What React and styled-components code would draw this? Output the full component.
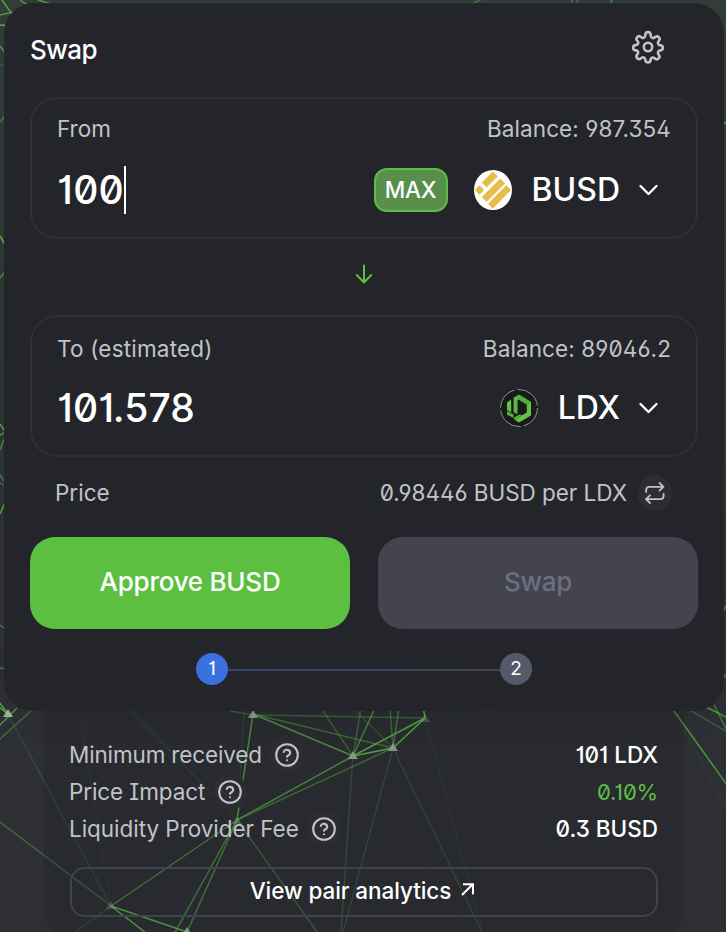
import React from "react";
import styled, { createGlobalStyle } from "styled-components";

const GlobalStyle = createGlobalStyle`
  * { box-sizing: border-box; }
  html, body { margin: 0; padding: 0; overflow: hidden; background: #2e3034; }
  body {
    font-family: Inter, sans-serif;
    font-feature-settings: "zero" on, "ss01" on, "cv08" on, "cv01" on, "cv03" on;
    color: #fff;
  }
  button { font: inherit; font-feature-settings: inherit; color: inherit; padding: 0; border: 0; background: none; }
`;

const Page = styled.main`
  position: relative;
  width: 726px;
  height: 932px;
  overflow: hidden;
  padding: 3px 2px 0 4px;
  background: linear-gradient(#333e3a 0, #303936 250px, #2f3236 560px, #2e2f34 750px);
`;

const Network = styled.svg`
  position: absolute;
  inset: 0;
`;

const Card = styled.section`
  position: relative;
  z-index: 1;
  height: 708px;
  padding: 94px 26px 0;
  border-radius: 30px;
  background: #24252a;
  box-shadow: 0 8px 30px rgba(0, 0, 0, 0.06);
  display: flex;
  flex-direction: column;
`;

const Header = styled.header`
  display: flex;
  justify-content: space-between;
  align-items: center;
  height: 40px;
  margin: -70px 33px 30px 0;
`;

const Title = styled.h1`
  margin: 6px 0 0;
  font-size: 26px;
  line-height: 32px;
  font-weight: 500;
  letter-spacing: -0.5px;
`;

const Field = styled.div`
  height: 142px;
  padding: ${(p) => p.$top}px 25px 0;
  border: 2px solid #2e3035;
  border-radius: 27px;
`;

const Between = styled.div`
  display: flex;
  justify-content: space-between;
  align-items: center;
  height: ${(p) => p.$h}px;
`;

const Label = styled.span`
  font-size: 22.5px;
  line-height: 28px;
  color: #c1c3c8;
  white-space: nowrap;
  letter-spacing: ${(p) => p.$ls || 0}px;
`;

const Amount = styled.div`
  display: flex;
  align-items: center;
  font-size: 39px;
  line-height: 48px;
  font-weight: 500;
  letter-spacing: ${(p) => p.$ls || 0}px;
`;

const Caret = styled.i`
  width: 2px;
  height: 48px;
  background: #fff;
`;

const TokenSide = styled.div`
  display: flex;
  align-items: center;
  padding-right: 13px;
`;

const MaxButton = styled.button`
  width: 74px;
  height: 44px;
  margin-right: 26px;
  padding-bottom: 1px;
  border: 2px solid #5fbf45;
  border-radius: 13px;
  background: #588f4b;
  font-size: 22.5px;
  font-weight: 480;
  letter-spacing: -0.3px;
`;

const TokenName = styled.span`
  margin: 0 19px 0 20px;
  font-size: 32px;
  line-height: 40px;
  font-weight: 460;
`;

const ArrowRow = styled.div`
  display: flex;
  justify-content: center;
  align-items: center;
  height: 76px;
  padding-bottom: 6px;
`;

const PriceRow = styled(Between)`
  padding: 0 26px 0 25px;
  margin-top: 17px;
`;

const PriceValue = styled.div`
  display: flex;
  align-items: center;
  gap: 11px;
`;

const RoundButton = styled.button`
  display: grid;
  place-items: center;
  width: 34px;
  height: 36px;
  border-radius: 50%;
  background: #2d2e33;
`;

const Actions = styled.div`
  display: grid;
  grid-template-columns: 1fr 1fr;
  gap: 28px;
  margin-top: 25px;
`;

const ActionButton = styled.button`
  height: 92px;
  padding-bottom: 3px;
  border-radius: 25px;
  font-size: 26px;
  font-weight: 460;
  letter-spacing: -0.25px;
  color: ${(p) => (p.$primary ? "#fff" : "#6c6f7e")};
  background: ${(p) => (p.$primary ? "#5dbf40" : "#43444f")};
`;

const Steps = styled.div`
  display: flex;
  align-items: center;
  justify-content: center;
  margin-top: 24px;
`;

const Step = styled.span`
  display: grid;
  place-items: center;
  width: 32px;
  height: 32px;
  padding-bottom: 1px;
  border-radius: 50%;
  background: ${(p) => (p.$active ? "#3b71de" : "#565969")};
  font-size: 19px;
`;

const StepLine = styled.span`
  width: 272px;
  height: 2px;
  margin-top: 2px;
  background: linear-gradient(90deg, #34436a, #41444e);
`;

const Details = styled.section`
  position: relative;
  width: 640px;
  height: 275px;
  margin: -50px 0 0 40px;
  padding: 76px 26px 0;
  border-radius: 0 0 26px 26px;
  background: rgba(18, 19, 24, 0.19);
`;

const DetailName = styled.div`
  display: flex;
  align-items: center;
  gap: 7px;
  margin-left: -1px;
`;

const HelpBadge = styled.span`
  display: grid;
  place-items: center;
  width: 36px;
  height: 36px;
  border-radius: 50%;
  background: #2c2d32;
`;

const DetailValue = styled.span`
  font-size: ${(p) => (p.$good ? 22 : 22.5)}px;
  line-height: 28px;
  font-weight: ${(p) => (p.$good ? 420 : 490)};
  letter-spacing: ${(p) => (p.$good ? -0.2 : 0)}px;
  color: ${(p) => (p.$good ? "#5dbf45" : "#fff")};
`;

const AnalyticsButton = styled.button`
  display: flex;
  align-items: center;
  justify-content: center;
  gap: 10px;
  width: 588px;
  height: 50px;
  margin-top: 20px;
  padding: 0 4px 3px 0;
  border: 2px solid #40424c;
  border-radius: 15px;
  font-size: 22.5px;
  font-weight: 490;
  letter-spacing: -0.08px;

  svg { margin-bottom: 3px; }
`;

const LINES = [
  [-10, 690, 8, 714, 0.8], [-10, 735, 17, 708, 0.7], [-10, 748, 34, 708, 0.4],
  [-10, 700, 8, 714, 0.8], [8, 714, 111, 906, 0.17],
  [0, 822, 111, 906, 0.38], [111, 906, 237, 820, 0.6], [111, 906, 150, 936, 0.9], [111, 906, 187, 932, 0.9],
  [111, 906, 70, 936, 0.2], [111, 906, 76, 690, 0.06], [111, 690, 237, 820, 0.12],
  [253, 714, 237, 820, 0.8], [245, 700, 240, 780, 0.15], [253, 714, 353, 756, 0.8], [253, 714, 393, 748, 0.5],
  [253, 715, 425, 718, 0.42], [230, 711, 253, 715, 0.4], [237, 820, 353, 756, 0.75],
  [237, 820, 393, 748, 0.5], [237, 820, 173, 936, 0.6], [237, 820, 187, 932, 0.6],
  [237, 820, 320, 936, 0.4], [353, 756, 425, 718, 0.95], [353, 756, 393, 748, 1], [393, 748, 425, 718, 1],
  [353, 756, 321, 708, 0.4], [353, 756, 375, 708, 0.75], [353, 756, 361, 708, 0.45], [353, 756, 341, 932, 0.27],
  [393, 748, 390, 708, 0.5], [393, 748, 399, 708, 0.6], [393, 748, 353, 708, 0.3], [425, 718, 423, 706, 1],
  [393, 748, 343, 932, 0.22], [393, 748, 482, 932, 0.2], [425, 718, 482, 932, 0.08], [353, 756, 470, 932, 0.05],
  [425, 718, 550, 705, 0.04], [674, 711, 740, 803, 0.7], [680, 704, 732, 735, 0.3], [706, 707, 740, 724, 0.7],
  [714, 705, 732, 740, 0.5], [674, 711, 740, 835, 0.06],
  [2, 0, 12, 14, 0.8], [20, 0, 29, 6, 0.7], [38, 0, 58, 6, 0.7], [0, 15, 18, 11, 0.7], [0, 25, 12, 26, 0.9],
  [0, 46, 6, 54, 0.7], [0, 65, 9, 64, 0.2], [0, 122, 8, 112, 0.5], [0, 236, 7, 248, 0.9], [0, 278, 7, 269, 0.6],
  [0, 424, 6, 433, 0.8], [0, 435, 8, 431, 0.7], [0, 450, 6, 434, 0.6], [0, 475, 8, 487, 0.5], [0, 483, 8, 487, 0.4],
  [0, 514, 7, 498, 0.8], [0, 625, 8, 631, 0.5], [0, 668, 6, 669, 0.5],
  [472, 4, 480, 0, 0.4], [572, 0, 573, 5, 0.5], [577, 0, 578, 5, 0.5], [610, 5, 612, 0, 0.6],
  [723, 121, 727, 125, 0.9], [723, 612, 727, 604, 0.6], [723, 673, 727, 679, 0.6],
];

const NODES = [[8, 713], [253, 714], [353, 755], [393, 747], [425, 718], [237, 820], [111, 905], [187, 931]];

function NetworkBackground() {
  return (
    <Network width="726" height="932" viewBox="0 0 726 932" aria-hidden="true">
      {LINES.map(([x1, y1, x2, y2, o], i) => (
        <line key={i} x1={x1} y1={y1} x2={x2} y2={y2} stroke="#5cc044" strokeWidth="1.5" opacity={o} />
      ))}
      {NODES.map(([x, y], i) => (
        <path key={i} d={`M${x} ${y - 4}l5 8h-10z`} fill="#b4beb6" opacity={i === 4 || i === 5 || i === 6 ? 0.3 : 0.85} />
      ))}
    </Network>
  );
}

function Gear() {
  return (
    <svg width="34" height="34" viewBox="0 0 34 34" fill="none" stroke="#c1c3c8" strokeWidth="2.6" strokeLinejoin="round">
      <circle cx="17" cy="17" r="4.2" />
      <path d="M14.4 4.3a2.65 2.65 0 0 1 5.2 0l.3 2a2.2 2.2 0 0 0 3.4 1.4l1.1-.8a2.65 2.65 0 0 1 3.7 3.7l-.8 1.1a2.2 2.2 0 0 0 1.4 3.4l1 .1a2.65 2.65 0 0 1 0 5.2l-1 .2a2.2 2.2 0 0 0-1.4 3.4l.6 1a2.65 2.65 0 0 1-3.7 3.7l-1.1-.8a2.2 2.2 0 0 0-3.4 1.4l-.1 1a2.65 2.65 0 0 1-5.2 0l-.3-1.2a2.2 2.2 0 0 0-3.4-1.4l-1 .8a2.65 2.65 0 0 1-3.7-3.7l.8-1a2.2 2.2 0 0 0-1.4-3.4l-1.1-.1a2.65 2.65 0 0 1 0-5.2l1.2-.2a2.2 2.2 0 0 0 1.4-3.4L6 10.5a2.65 2.65 0 0 1 3.7-3.7l1 .8a2.2 2.2 0 0 0 3.4-1.4z" />
    </svg>
  );
}

function Chevron() {
  return (
    <svg width="19" height="12" viewBox="0 0 19 12" fill="none" stroke="#fff" strokeWidth="2.3" strokeLinecap="round" strokeLinejoin="round">
      <path d="M1.5 2l8 8 8-8" />
    </svg>
  );
}

function BusdLogo() {
  return (
    <svg width="38" height="40" viewBox="0 0 38 40">
      <ellipse cx="19" cy="20" rx="19" ry="20" fill="#fff" />
      <g fill="#e7bd4a">
        <path d="M18.8 1.5l5 4.8L12.6 17.5l-4.8-5z" />
        <path d="M5.5 15.3l4.6 4.7-4.6 4.7L.9 20z" />
        <path d="M26.3 8.6l4.8 4.8L12.6 31.8l-4.8-4.8z" />
        <path d="M32.2 15.2l4.8 4.8L18.8 38.7l-4.9-4.9z" />
      </g>
    </svg>
  );
}

function LdxLogo() {
  return (
    <svg width="38" height="38" viewBox="0 0 38 38">
      <circle cx="19" cy="19" r="18.5" fill="#181b18" stroke="#a9adad" strokeWidth=".8" strokeDasharray="24 3 28 3" />
      <path d="M7 13.5l4.2-3v13L7 21z" fill="#62bf48" />
      <path d="M7 22l6.5 3.6v3.2L7 25.8z" fill="#57b141" />
      <path d="M13.6 8.8L19 5.5v4.7l-1.5 1v14l-3.9-2z" fill="#5cb845" />
      <path d="M19 5.5l12 7.2-4.2 3L17.5 10z" fill="#56ad42" />
      <path d="M31 12.7v13.8L19 33.5l-4.5-2.8L26.8 23.4v-7.7z" fill="#63c349" />
      <path d="M13.5 28.8l5.8-3.4 3 .7-7.8 4.6z" fill="#55ae41" />
    </svg>
  );
}

function DownArrow() {
  return (
    <svg width="18" height="20" viewBox="0 0 18 20" fill="none" stroke="#5dbf45" strokeWidth="2" strokeLinecap="round" strokeLinejoin="round">
      <path d="M9 1.5v17M1.8 11L9 18.5l7.2-7.5" />
    </svg>
  );
}

function Repeat() {
  return (
    <svg width="20" height="22" viewBox="0 0 20 22" fill="none" stroke="#c1c3c8" strokeWidth="1.8" strokeLinecap="round" strokeLinejoin="round">
      <path d="M14.5 1l4 3.8-4 3.8M1.2 10V8a3.2 3.2 0 0 1 3.2-3.2h14M5 13.4l-4 3.8L5 21M18.6 12v2a3.2 3.2 0 0 1-3.2 3.2H1.2" />
    </svg>
  );
}

function Help() {
  return (
    <HelpBadge>
      <svg width="24" height="24" viewBox="0 0 24 24" fill="none" stroke="#c1c3c8" strokeWidth="2.1" strokeLinecap="round">
        <circle cx="12" cy="12" r="10.8" />
        <path d="M8.8 9a3.3 3.3 0 0 1 6.4 1c0 2.2-3.2 2.6-3.2 3.8M12 17.3h.01" />
      </svg>
    </HelpBadge>
  );
}

function UpRight() {
  return (
    <svg width="13" height="13" viewBox="0 0 13 13" fill="none" stroke="#fff" strokeWidth="2">
      <path d="M1 12L11.5 1.5M2 1.2h10v10" />
    </svg>
  );
}

function Detail({ name, value, good, height, spacing }) {
  return (
    <Between $h={height}>
      <DetailName><Label $ls={spacing}>{name}</Label><Help /></DetailName>
      <DetailValue $good={good}>{value}</DetailValue>
    </Between>
  );
}

export default function App() {
  return (
    <Page>
      <GlobalStyle />
      <NetworkBackground />
      <Card>
        <Header><Title>Swap</Title><Gear /></Header>
        <Field $top={16}>
          <Between $h={28}><Label>From</Label><Label $ls={0.1}>Balance: 987.354</Label></Between>
          <Between $h={93}>
            <Amount $ls={0.3}>100<Caret /></Amount>
            <TokenSide><MaxButton>MAX</MaxButton><BusdLogo /><TokenName>BUSD</TokenName><Chevron /></TokenSide>
          </Between>
        </Field>
        <ArrowRow><DownArrow /></ArrowRow>
        <Field $top={18}>
          <Between $h={28}><Label $ls={0.2}>To (estimated)</Label><Label $ls={0.1}>Balance: 89046.2</Label></Between>
          <Between $h={90}>
            <Amount $ls={0.15}>101.578</Amount>
            <TokenSide><LdxLogo /><TokenName>LDX</TokenName><Chevron /></TokenSide>
          </Between>
        </Field>
        <PriceRow $h={38}>
          <Label>Price</Label>
          <PriceValue><Label $ls={-0.04}>0.98446 BUSD per LDX</Label><RoundButton><Repeat /></RoundButton></PriceValue>
        </PriceRow>
        <Actions>
          <ActionButton $primary>Approve BUSD</ActionButton>
          <ActionButton disabled>Swap</ActionButton>
        </Actions>
        <Steps><Step $active>1</Step><StepLine /><Step>2</Step></Steps>
      </Card>
      <Details>
        <Detail name="Minimum received" value="101 LDX" height={36} spacing={-0.15} />
        <Detail name="Price Impact" value="0.10%" good height={38} spacing={-0.1} />
        <Detail name="Liquidity Provider Fee" value="0.3 BUSD" height={36} spacing={-0.04} />
        <AnalyticsButton>View pair analytics <UpRight /></AnalyticsButton>
      </Details>
    </Page>
  );
}
